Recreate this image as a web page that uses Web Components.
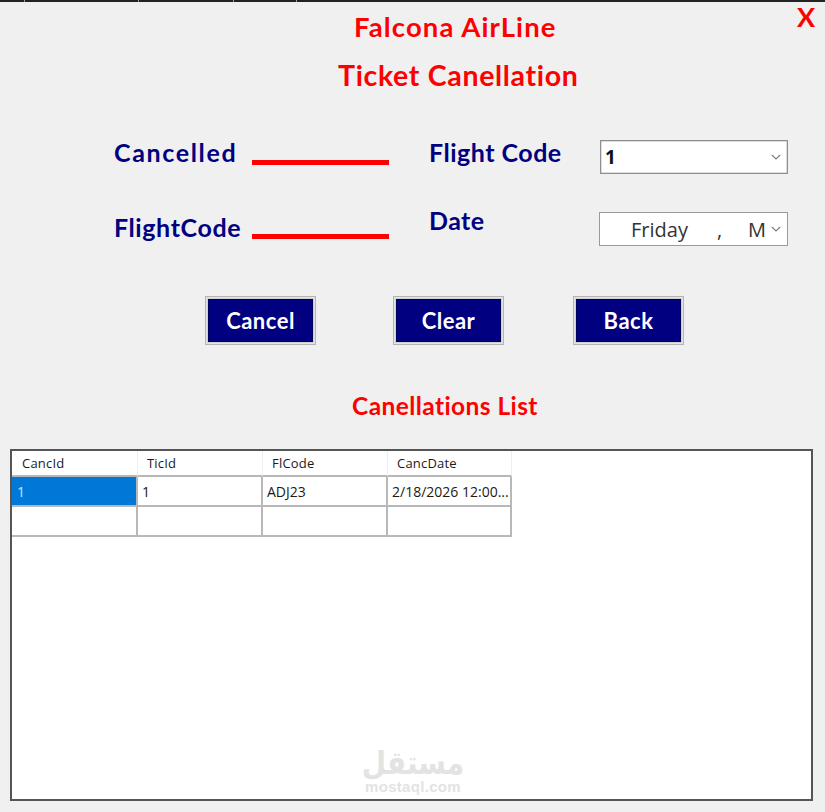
<!DOCTYPE html>
<html><head><meta charset="utf-8"><style>html,body{margin:0;padding:0;background:#f0f0f0}</style></head>
<body><fa-window></fa-window>
<script>
function def(name, css, html){
  customElements.define(name, class extends HTMLElement{
    constructor(){super();const r=this.attachShadow({mode:'open'});r.innerHTML='<style>'+css+'</style>'+html;}
  });
}
const HEAD='font-family:Lato,sans-serif;font-weight:700;';
def('fa-strip',`:host{display:flex;height:2px;background:#222}
 i{display:block;width:1px;background:#9a9a9a}`,
 `<span style="width:24px"></span><i></i><span style="width:113px"></span><i></i><span style="width:94px"></span><i></i><span style="width:62px"></span><i></i>`);
def('fa-title',`:host{display:block;${HEAD}color:#f00;white-space:nowrap;line-height:1}`,`<slot></slot>`);
def('fa-label',`:host{display:block;${HEAD}color:#000080;white-space:nowrap;line-height:24px;font-size:25px;letter-spacing:1.2px}`,`<slot></slot>`);
def('fa-line',`:host{display:block;width:137px;height:5px;background:#f00}`,``);
const chev=`<svg width="10" height="6" viewBox="0 0 10 6" fill="none" stroke="#7a7a7a" stroke-width="1.2"><path d="M.8.8 5 5 9.2.8"/></svg>`;
def('fa-select',`:host{display:flex;align-items:center;box-sizing:border-box;width:188px;height:34px;background:#fff;border:1px solid #8f8f8f;box-shadow:inset 0 0 0 .5px #bbb;padding:0 6px 0 4px;font:700 19px "Open Sans",sans-serif;color:#111}
 span{flex:1}`,`<span><slot></slot></span>${chev}`);
def('fa-date',`:host{display:flex;align-items:center;box-sizing:border-box;width:189px;height:34px;background:#fff;border:1px solid #9a9a9a;padding:0 6px 0 31px;font:400 20px "Open Sans",sans-serif;color:#333}
 .t{flex:1;display:flex;white-space:pre;height:100%;align-items:center}
 .c{margin-left:29px}.m{margin-left:26px}`,
 `<span class="t"><span><slot></slot></span><span class="c">,</span><span class="m">M</span></span>${chev}`);
def('fa-button',`:host{display:block;box-sizing:border-box;width:111px;height:49px;border:1px solid #b4b4b4;background:#e4e4e4;padding:2px}
 div{box-sizing:border-box;height:100%;background:#000080;border:1px solid #000060;box-shadow:0 0 0 1px #d0d0d0;color:#fff;display:flex;align-items:center;justify-content:center;${HEAD}font-size:22px;line-height:1;letter-spacing:.5px}`,
 `<div><slot></slot></div>`);
def('fa-cell',`:host{display:flex;align-items:center;box-sizing:border-box;padding:0 4px;font:14px "Open Sans",sans-serif;color:#1a1a1a;overflow:hidden;white-space:nowrap;border-right:2px solid #b8b8b8;border-bottom:2px solid #b8b8b8;background:#fff}
 :host([first]){padding-left:5px}
 :host([head]){padding-left:9px;border-right:1px solid #eee;font-size:13px;letter-spacing:.2px}
 :host([head][first]){padding-left:10px}
 :host([sel]){background:#0078d7;color:#cfe4f7}`,`<slot></slot>`);
def('fa-grid',`:host{display:block;box-sizing:border-box;width:803px;height:352px;background:#fff;border:2px solid #555;position:relative}
 .g{display:grid;grid-template-columns:126px 125px 125px 124px;grid-template-rows:26px 30px 30px;width:500px}`,
 `<div class="g"><slot></slot></div><slot name="over"></slot>`);
def('fa-watermark',`:host{display:flex;flex-direction:column;align-items:center;position:absolute;left:338px;top:300px;width:126px;color:#e3e3e3}
 .a{font:700 28px/29px "DejaVu Sans",sans-serif;transform:scaleY(1.15);transform-origin:50% 100%}
 .b{font:700 15px/14px "Liberation Sans",sans-serif;letter-spacing:.3px}`,
 `<div class="a" lang="ar" dir="rtl">مستقل</div><div class="b">mostaql.com</div>`);
def('fa-window',`
 :host{display:block;width:825px;height:812px;background:#f0f0f0;overflow:hidden}
 .hd{display:flex;justify-content:space-between;align-items:flex-start;padding:11px 10px 0 354px;height:39px;box-sizing:content-box}
 .hd .x{font-size:27px;margin-top:-10px}
 .t1{font-size:27.5px;letter-spacing:1.1px}
 .t2{font-size:28.5px;line-height:27px;letter-spacing:.67px;margin:10px 0 0 338px}
 .form{display:grid;grid-template-columns:138px 178px 170px 188px;grid-template-rows:72px 48px;padding:51px 0 0 114px;box-sizing:content-box}
 .buttons{display:flex;padding:0 0 0 205px;margin-top:36px}
 .list{font-size:24.5px;line-height:24px;letter-spacing:.42px;margin:49px 0 0 352px}
 fa-grid{margin:31px 0 0 10px}
 .l1{margin-top:0;letter-spacing:1.65px}.ln1{margin-top:20px}.r1{margin:0 0 0 -1px;letter-spacing:.5px}
 .l2{margin-top:3px;letter-spacing:.6px}.ln2{margin-top:22px}.r2{margin:-4px 0 0 -1px;letter-spacing:.45px}.s2{margin:0 0 0 -1px}
`,`
 <fa-strip></fa-strip>
 <div class="hd"><fa-title class="t1">Falcona AirLine</fa-title><fa-title class="x">X</fa-title></div>
 <fa-title class="t2">Ticket Canellation</fa-title>
 <div class="form">
  <fa-label class="l1">Cancelled</fa-label><div><fa-line class="ln1"></fa-line></div><fa-label class="r1">Flight Code</fa-label><div><fa-select>1</fa-select></div>
  <fa-label class="l2">FlightCode</fa-label><div><fa-line class="ln2"></fa-line></div><fa-label class="r2">Date</fa-label><div><fa-date class="s2">Friday</fa-date></div>
 </div>
 <div class="buttons"><fa-button>Cancel</fa-button><fa-button style="margin-left:77px">Clear</fa-button><fa-button style="margin-left:69px">Back</fa-button></div>
 <fa-title class="list">Canellations List</fa-title>
 <fa-grid>
  <fa-cell head first>CancId</fa-cell><fa-cell head>TicId</fa-cell><fa-cell head>FlCode</fa-cell><fa-cell head>CancDate</fa-cell>
  <fa-cell sel first>1</fa-cell><fa-cell>1</fa-cell><fa-cell>ADJ23</fa-cell><fa-cell>2/18/2026 12:00...</fa-cell>
  <fa-cell></fa-cell><fa-cell></fa-cell><fa-cell></fa-cell><fa-cell></fa-cell>
  <fa-watermark slot="over"></fa-watermark>
 </fa-grid>`);
</script></body></html>
